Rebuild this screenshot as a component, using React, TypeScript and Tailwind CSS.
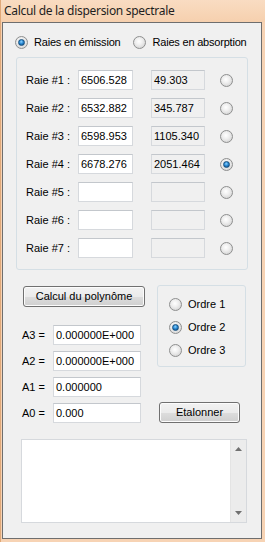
import React from "react";

const font = { fontFamily: '"Liberation Sans", Arial, sans-serif' };

function Radio({ checked = false }: { checked?: boolean }) {
  return (
    <div className="w-[13px] h-[13px] rounded-full border border-[#8e8f8f] bg-[radial-gradient(circle_at_45%_40%,#ffffff_0%,#eeeeee_40%,#c9c9c9_100%)] flex items-center justify-center shrink-0">
      {checked && (
        <div className="w-[7px] h-[7px] rounded-full bg-[radial-gradient(circle_at_45%_35%,#8fd3ff_0%,#2a8ad4_45%,#0a3f72_100%)] border border-[#16507f]" />
      )}
    </div>
  );
}

function TextBox({ value = "", w, ro = false }: { value?: string; w: string; ro?: boolean }) {
  return (
    <div
      className={`${w} h-[20px] border border-[#d6d9dd] border-t-[#c3c7cc] ${ro ? "bg-[#f0f0f0]" : "bg-white"} flex items-center pl-[2px] text-[11px] text-black leading-none`}
    >
      {value}
    </div>
  );
}

function Button({ label, w }: { label: string; w: string }) {
  return (
    <div className={`${w} h-[21px] rounded-[3px] border border-[#707070] bg-[linear-gradient(to_bottom,#f2f2f2_0%,#ebebeb_50%,#dddddd_51%,#cfcfcf_100%)] flex items-center justify-center text-[11px] text-black shadow-[inset_0_0_0_1px_#fcfcfc]`}>
      {label}
    </div>
  );
}

const rows = [
  { n: 1, a: "6506.528", b: "49.303", c: false },
  { n: 2, a: "6532.882", b: "345.787", c: false },
  { n: 3, a: "6598.953", b: "1105.340", c: false },
  { n: 4, a: "6678.276", b: "2051.464", c: true },
  { n: 5, a: "", b: "", c: false },
  { n: 6, a: "", b: "", c: false },
  { n: 7, a: "", b: "", c: false },
];

const coefs = [
  { l: "A3 =", v: "0.000000E+000" },
  { l: "A2 =", v: "0.000000E+000" },
  { l: "A1 =", v: "0.000000" },
  { l: "A0 =", v: "0.000" },
];

export default function App() {
  return (
    <div
      className="w-[265px] h-[542px] bg-[#f7d3b4] flex flex-col overflow-hidden border-l border-[#e0a878]"
      style={font}
    >
      <div className="h-[22px] shrink-0 flex items-center pl-[3px] text-[12px] text-[#1e1e1e] bg-[linear-gradient(to_bottom,#f9dcc2,#f6d0ae)] tracking-[-0.3px]"
        style={{ fontFamily: '"Noto Sans", "Open Sans", sans-serif' }}>
        Calcul de la dispersion spectrale
      </div>
      <div className="ml-[1px] mr-[3px] h-[517px] border border-[#6e6e6e] bg-[#f0f0f0] flex flex-col text-[11px] text-black">
        {/* mode radios */}
        <div className="mt-[9px] h-[20px] flex items-center tracking-[-0.2px]">
          <div className="ml-[12px]"><Radio checked /></div>
          <span className="ml-[6px]">Raies en émission</span>
          <div className="ml-[13px]"><Radio /></div>
          <span className="ml-[6px]">Raies en absorption</span>
        </div>
        {/* lines group */}
        <div className="mt-[5px] ml-[13px] w-[232px] h-[213px] border border-[#d5dfe5] rounded-[3px] pt-[12px] flex flex-col gap-[8px]">
          {rows.map((r) => (
            <div key={r.n} className="flex items-center h-[20px]">
              <span className="ml-[9px] w-[52px]">Raie #{r.n} :</span>
              <TextBox w="w-[55px]" value={r.a} />
              <div className="ml-[18px]"><TextBox w="w-[54px]" value={r.b} ro /></div>
              <div className="ml-[15px]"><Radio checked={r.c} /></div>
            </div>
          ))}
        </div>
        {/* bottom section */}
        <div className="mt-[15px] flex">
          <div className="ml-[19px] w-[125px] flex flex-col">
            <div className="mt-[1px] ml-[1px]"><Button label="Calcul du polynôme" w="w-[122px]" /></div>
            <div className="mt-[18px] flex flex-col gap-[6px]">
              {coefs.map((c) => (
                <div key={c.l} className="flex items-center h-[20px]">
                  <span className="w-[31px]">{c.l}</span>
                  <TextBox w="w-[88px]" value={c.v} />
                </div>
              ))}
            </div>
          </div>
          <div className="ml-[10px] flex flex-col">
            <div className="w-[89px] h-[82px] border border-[#d5dfe5] rounded-[3px] flex flex-col pt-[12px] gap-[10px]">
              {["Ordre 1", "Ordre 2", "Ordre 3"].map((o, i) => (
                <div key={o} className="flex items-center h-[13px]">
                  <div className="ml-[11px]"><Radio checked={i === 1} /></div>
                  <span className="ml-[6px] text-[11px]">{o}</span>
                </div>
              ))}
            </div>
            <div className="mt-[35px] ml-[2px]"><Button label="Etalonner" w="w-[81px]" /></div>
          </div>
        </div>
        {/* text area */}
        <div className="mt-[16px] ml-[18px] w-[226px] h-[84px] border border-[#d6d9dd] bg-white flex justify-end">
          <div className="w-[16px] h-full bg-[#ececec] border-l border-[#e4e4e4] flex flex-col items-center justify-between py-[7px]">
            <svg width="7" height="4" viewBox="0 0 7 4"><path d="M0 4 L3.5 0 L7 4 Z" fill="#707070" /></svg>
            <svg width="7" height="4" viewBox="0 0 7 4"><path d="M0 0 L3.5 4 L7 0 Z" fill="#707070" /></svg>
          </div>
        </div>
      </div>
    </div>
  );
}
